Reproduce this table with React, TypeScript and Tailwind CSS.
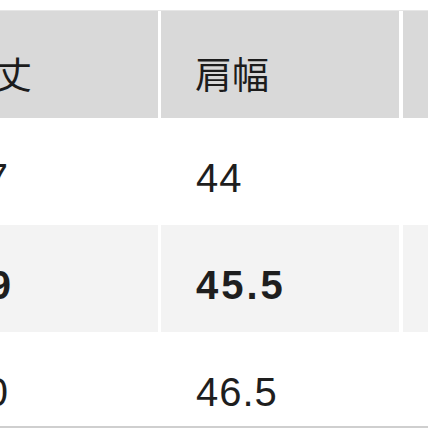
import React from "react";

const rows = [
  { a: "67", b: "44", c: "", bold: false, bg: "bg-white" },
  { a: "69", b: "45.5", c: "", bold: true, bg: "bg-[#f3f3f3]" },
  { a: "70", b: "46.5", c: "", bold: false, bg: "bg-white" },
];

export default function App() {
  return (
    <div className="w-[428px] h-[428px] overflow-hidden bg-white relative" style={{ fontFamily: '"Liberation Sans", Arial, "Noto Sans CJK JP", sans-serif' }}>
      <div className="ml-[-80px] mt-[10px] w-[760px] flex flex-col">
        <div className="flex h-[108px] border-t border-[#e6e6e6]">
          <div className="w-[238px] bg-[#d9d9d9] flex items-center justify-end pr-[126px] pt-[18px]">
            <span className="text-[37px] text-[#1c1c1c]" style={{ fontFamily: '"Noto Sans CJK JP", sans-serif' }}>着丈</span>
          </div>
          <div className="w-[3px] bg-white" />
          <div className="w-[238px] bg-[#d9d9d9] flex items-center pl-[34px] pt-[18px]">
            <span className="text-[37px] text-[#1c1c1c]" style={{ fontFamily: '"Noto Sans CJK JP", sans-serif' }}>肩幅</span>
          </div>
          <div className="w-[4px] bg-white" />
          <div className="w-[238px] bg-[#d9d9d9] flex items-center pl-[34px] pt-[18px]">
            <span className="text-[37px] text-[#1c1c1c]" style={{ fontFamily: '"Noto Sans CJK JP", sans-serif' }}>袖丈</span>
          </div>
        </div>
        {rows.map((r, i) => (
          <div key={i} className={`flex h-[107px] ${r.bg}`}>
            <div className={`w-[238px] flex items-center justify-end pt-[12px] text-[40px] text-[#1e1e1e] ${r.bold ? "font-bold tracking-[3px] pr-[144px]" : "tracking-[1px] pr-[149px]"}`}>
              {r.a}
            </div>
            <div className="w-[3px] bg-white" />
            <div className={`w-[238px] flex items-center pl-[35px] pt-[12px] text-[40px] text-[#1e1e1e] ${r.bold ? "font-bold tracking-[3px]" : "tracking-[1px]"}`}>
              {r.b}
            </div>
            <div className="w-[4px] bg-white" />
            <div className="w-[238px] flex items-center pl-[35px] pt-[12px] text-[40px] text-[#1e1e1e]">
              {r.c}
            </div>
          </div>
        ))}
      </div>
      <div className="absolute left-0 top-[426px] w-full h-[2px] bg-[#cfcfcf]" />
    </div>
  );
}
